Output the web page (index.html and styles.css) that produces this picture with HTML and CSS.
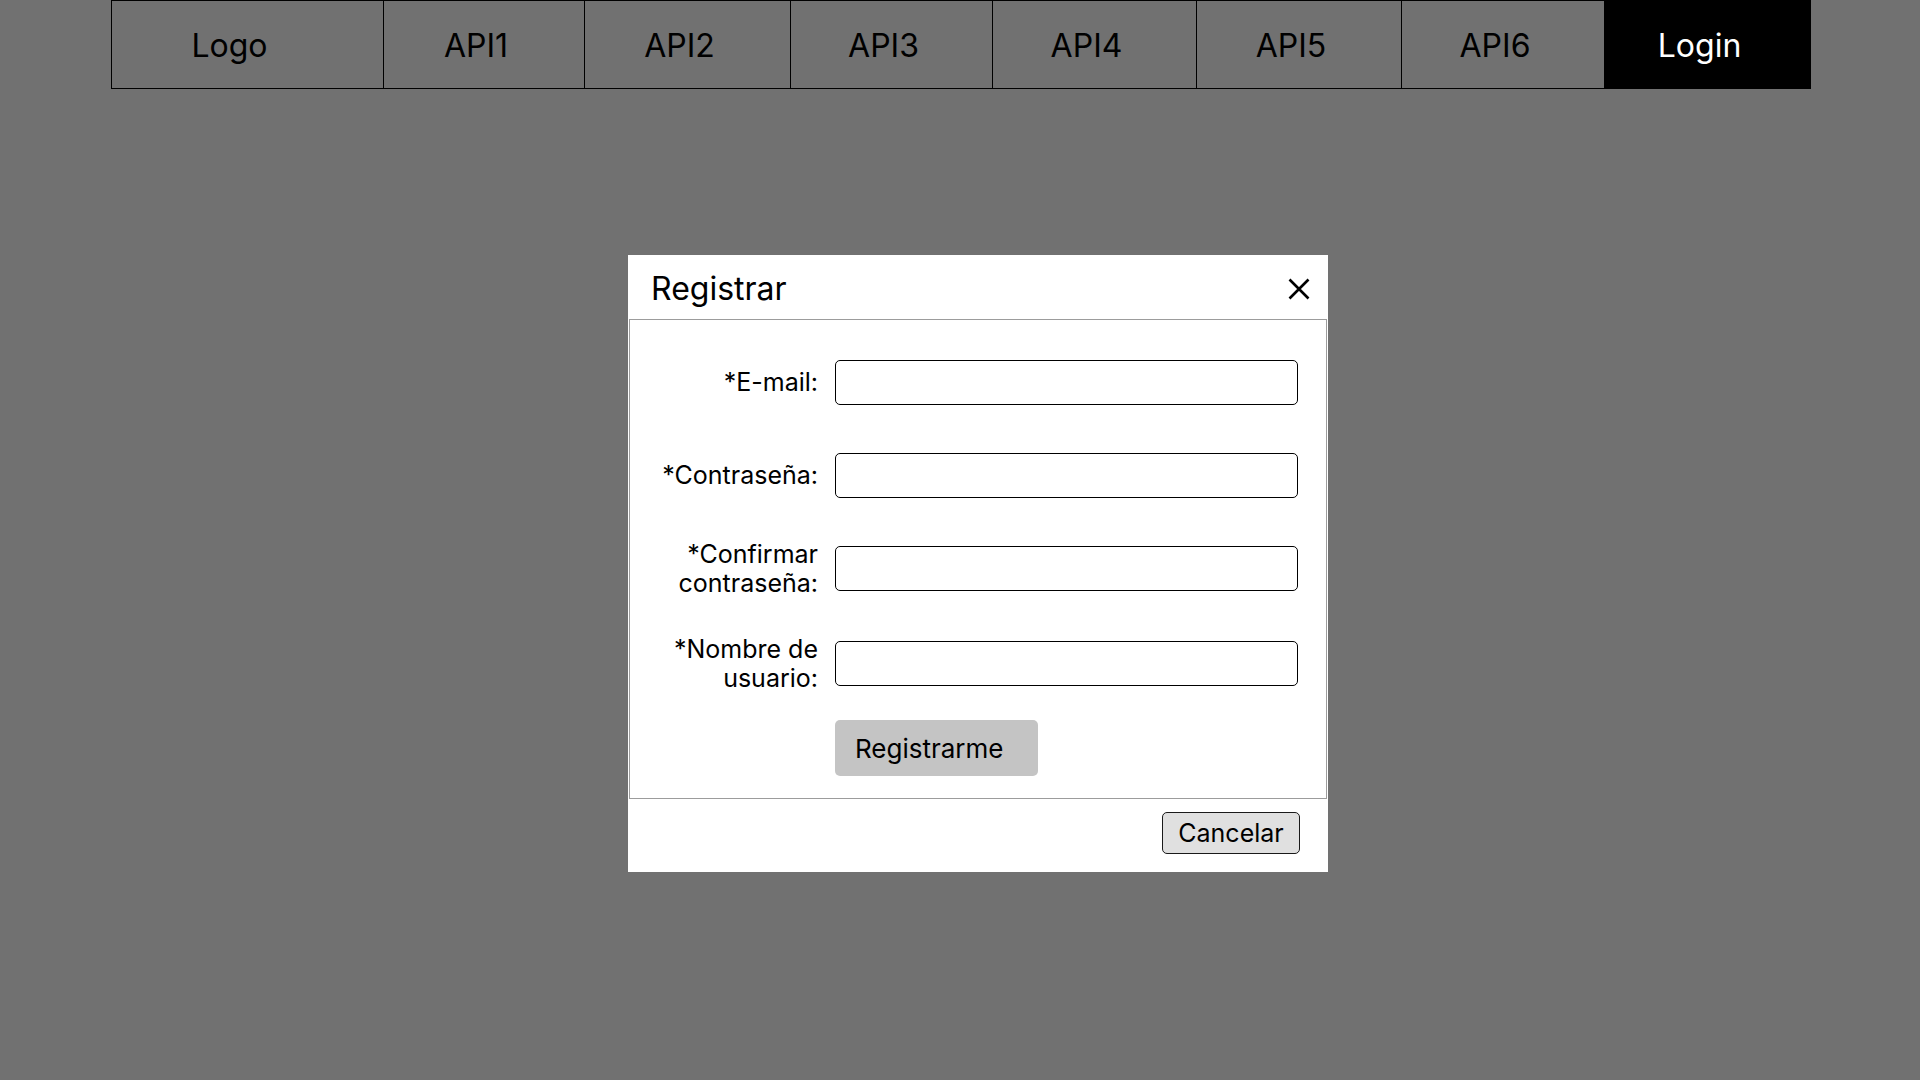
FILE: index.html
```html
<!DOCTYPE html>
<html lang="es">
<head>
<meta charset="utf-8">
<title>Registrar</title>
<link rel="stylesheet" href="styles.css">
</head>
<body>
<nav class="topnav">
  <div class="nav-item nav-logo">Logo</div>
  <div class="nav-item w201">API1</div>
  <div class="nav-item w206">API2</div>
  <div class="nav-item w202">API3</div>
  <div class="nav-item w204">API4</div>
  <div class="nav-item w205">API5</div>
  <div class="nav-item w203">API6</div>
  <div class="nav-item nav-login">Login</div>
</nav>
<main class="stage">
  <section class="modal">
    <header class="modal-header">
      <h2 class="modal-title">Registrar</h2>
      <button class="close-btn" aria-label="Cerrar">
        <svg width="22" height="22" viewBox="0 0 22 22"><path d="M1.5 1.5 L20.5 20.5 M20.5 1.5 L1.5 20.5" stroke="#000" stroke-width="2.6" fill="none"/></svg>
      </button>
    </header>
    <div class="modal-body">
      <form class="form-grid">
        <label class="form-label" for="email">*E-mail:</label>
        <input class="form-input" id="email" type="text">
        <label class="form-label" for="pass">*Contraseña:</label>
        <input class="form-input" id="pass" type="password">
        <label class="form-label" for="pass2">*Confirmar contraseña:</label>
        <input class="form-input" id="pass2" type="password">
        <label class="form-label" for="user">*Nombre de usuario:</label>
        <input class="form-input" id="user" type="text">
        <span></span>
        <div class="submit-cell"><button type="button" class="btn-register">Registrarme</button></div>
      </form>
    </div>
    <footer class="modal-footer">
      <button class="btn-cancel">Cancelar</button>
    </footer>
  </section>
</main>
</body>
</html>
```
FILE: styles.css
```css
* { box-sizing: border-box; }
html, body { margin: 0; padding: 0; }
body {
  background: #717171;
  font-family: Inter, "Noto Sans", sans-serif;
  color: #000;
  width: 1920px;
  height: 1080px;
  overflow: hidden;
}
.topnav {
  display: flex;
  margin-left: 111px;
  width: 1700px;
  height: 89px;
}
.nav-item {
  height: 89px;
  border: 1px solid #000;
  border-left: none;
  display: flex;
  align-items: center;
  justify-content: center;
  font-size: 32px;
  padding: 2px 16px 0 0;
}
.nav-logo { width: 273px; border-left: 1px solid #000; padding-right: 36px; }
.w201 { width: 201px; }
.w202 { width: 202px; }
.w203 { width: 203px; }
.w204 { width: 204px; }
.w205 { width: 205px; }
.w206 { width: 206px; }
.nav-login { width: 206px; background: #000; color: #fff; border-color: #000; }

.stage {
  padding-top: 166px;
  padding-left: 628px;
}
.modal {
  width: 700px;
  background: #fff;
}
.modal-header {
  height: 64px;
  display: flex;
  align-items: center;
  justify-content: space-between;
  padding: 2px 18px 0 23px;
}
.modal-title {
  margin: 0;
  font-size: 32px;
  font-weight: 400;
}
.close-btn {
  background: none;
  border: none;
  padding: 0;
  width: 22px;
  height: 22px;
  display: flex;
  margin-top: 2px;
}
.modal-body {
  margin: 0 1px;
  border: 1px solid #9c9c9c;
}
.form-grid {
  display: grid;
  grid-template-columns: 160px 463px;
  grid-template-rows: 93px 92px 95px 95px 74px;
  column-gap: 17px;
  align-items: center;
  padding: 16px 0 13px 28px;
}
.form-label {
  font-size: 25px;
  line-height: 29px;
  text-align: right;
}
.form-input {
  width: 463px;
  height: 45px;
  border: 1px solid #000;
  border-radius: 5px;
  background: #fff;
  font: inherit;
}
.submit-cell { display: flex; }
.btn-register {
  width: 203px;
  height: 56px;
  background: #c4c4c4;
  border: none;
  border-radius: 5px;
  font-family: Inter, "Noto Sans", sans-serif;
  font-size: 26px;
  text-align: left;
  padding: 0 0 0 20px;
  color: #000;
}
.modal-footer {
  height: 73px;
  display: flex;
  align-items: flex-start;
  justify-content: flex-end;
  padding: 13px 28px 0 0;
}
.btn-cancel {
  width: 138px;
  height: 42px;
  background: #e0e0e0;
  border: 1px solid #1a1a1a;
  border-radius: 5px;
  font-family: Inter, "Noto Sans", sans-serif;
  font-size: 25px;
  color: #000;
  padding: 0;
}
```
